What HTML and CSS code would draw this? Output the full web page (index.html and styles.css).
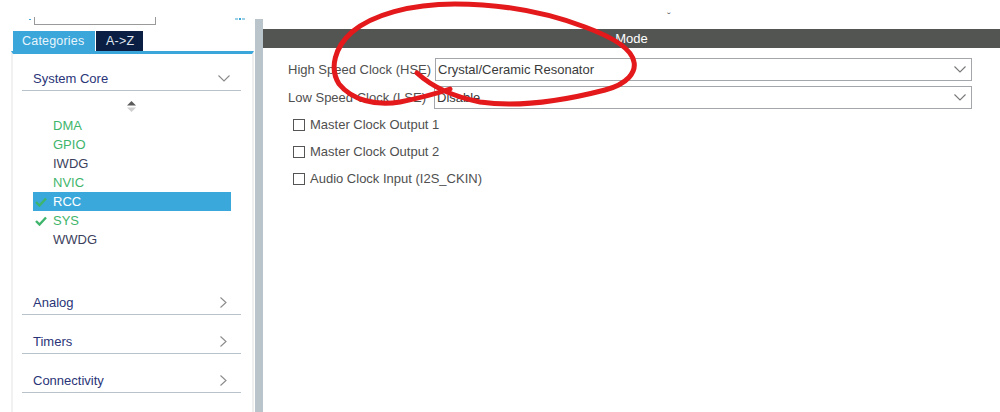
FILE: index.html
```html
<!DOCTYPE html>
<html lang="en">
<head>
<meta charset="utf-8">
<title>Pinout &amp; Configuration</title>
<link rel="stylesheet" href="styles.css">
</head>
<body>
<div class="app">
  <aside class="left">
    <div class="search-row">
      <span class="dot"></span>
      <div class="search-box"></div>
      <span class="search-icon"></span>
    </div>
    <div class="tabs">
      <div class="tab active">Categories</div>
      <div class="tab dark">A-&gt;Z</div>
    </div>
    <div class="panel">
      <div class="cat-head first">
        <span>System Core</span>
        <svg class="chev-down" width="12" height="7" viewBox="0 0 12 7"><path d="M0.5 0.5 L6 6 L11.5 0.5" fill="none" stroke="#8a8a8a" stroke-width="1.1"/></svg>
      </div>
      <div class="sorter">
        <svg width="9" height="11" viewBox="0 0 9 11"><path d="M4.5 0 L9 4.5 L0 4.5 Z" fill="#5b5b5b"/><path d="M0 6.5 L9 6.5 L4.5 11 Z" fill="#cfcfcf"/></svg>
      </div>
      <ul class="items">
        <li class="ok"><span class="chk"></span>DMA</li>
        <li class="ok"><span class="chk"></span>GPIO</li>
        <li><span class="chk"></span>IWDG</li>
        <li class="ok"><span class="chk"></span>NVIC</li>
        <li class="sel"><span class="chk"><svg width="12" height="10" viewBox="0 0 12 10"><path d="M1 5 L4.5 8.5 L11 1.5" fill="none" stroke="#3fb56c" stroke-width="2.4"/></svg></span>RCC</li>
        <li class="ok"><span class="chk"><svg width="12" height="10" viewBox="0 0 12 10"><path d="M1 5 L4.5 8.5 L11 1.5" fill="none" stroke="#3fb56c" stroke-width="2.4"/></svg></span>SYS</li>
        <li><span class="chk"></span>WWDG</li>
      </ul>
      <div class="cat-head analog">
        <span>Analog</span>
        <svg class="chev-right" width="7" height="11" viewBox="0 0 7 11"><path d="M0.5 0.5 L6 5.5 L0.5 10.5" fill="none" stroke="#8a8a8a" stroke-width="1.1"/></svg>
      </div>
      <div class="cat-head">
        <span>Timers</span>
        <svg class="chev-right" width="7" height="11" viewBox="0 0 7 11"><path d="M0.5 0.5 L6 5.5 L0.5 10.5" fill="none" stroke="#8a8a8a" stroke-width="1.1"/></svg>
      </div>
      <div class="cat-head">
        <span>Connectivity</span>
        <svg class="chev-right" width="7" height="11" viewBox="0 0 7 11"><path d="M0.5 0.5 L6 5.5 L0.5 10.5" fill="none" stroke="#8a8a8a" stroke-width="1.1"/></svg>
      </div>
    </div>
  </aside>
  <div class="divider"></div>
  <main class="main">
    <div class="top-strip"><span class="cut">ˇ</span></div>
    <div class="mode-bar">Mode</div>
    <div class="form">
      <div class="field">
        <label>High Speed Clock (HSE)</label>
        <div class="select"><span>Crystal/Ceramic Resonator</span><svg width="12" height="7" viewBox="0 0 12 7"><path d="M0.5 0.5 L6 6 L11.5 0.5" fill="none" stroke="#777" stroke-width="1.1"/></svg></div>
      </div>
      <div class="field second">
        <label>Low Speed Clock (LSE)</label>
        <div class="select"><span>Disable</span><svg width="12" height="7" viewBox="0 0 12 7"><path d="M0.5 0.5 L6 6 L11.5 0.5" fill="none" stroke="#777" stroke-width="1.1"/></svg></div>
      </div>
      <div class="checks">
        <div class="check"><span class="box"></span>Master Clock Output 1</div>
        <div class="check"><span class="box"></span>Master Clock Output 2</div>
        <div class="check"><span class="box"></span>Audio Clock Input (I2S_CKIN)</div>
      </div>
    </div>
  </main>
  <svg class="annotation" width="1000" height="412" viewBox="0 0 1000 412">
    <path d="M417,73 C430,85 450,96 480,102 C520,108 570,99 605,90 C628,84 636,72 634,62 C632,50 615,38 585,27 C545,12 500,4 455,4 C410,4 372,15 352,32 C335,47 329,68 339,84 C352,100 375,106 400,102 C420,98 438,93 450,89" fill="none" stroke="#e3191b" stroke-width="5" stroke-linecap="round" stroke-linejoin="round"/>
  </svg>
</div>
</body>
</html>
```

FILE: styles.css
```css
* { box-sizing: border-box; }
html, body { margin: 0; padding: 0; background: #ffffff; }
body { font-family: "Liberation Sans", Arial, sans-serif; }

.app {
  position: relative;
  display: flex;
  width: 1000px;
  height: 412px;
  overflow: hidden;
  background: #ffffff;
}

/* ---------- left column ---------- */
.left {
  width: 255px;
  flex: none;
  display: flex;
  flex-direction: column;
}

.search-row {
  height: 31px;
  display: flex;
  align-items: flex-start;
}
.dot {
  width: 2px;
  height: 1px;
  margin: 19px 0 0 29px;
  background: #3aa6da;
}
.search-box {
  width: 122px;
  height: 8px;
  margin: 17px 0 0 3px;
  border: 1px solid #9a9a9a;
  border-top: none;
}
.search-icon {
  width: 10px;
  height: 2px;
  margin: 18px 10px 0 auto;
  background: linear-gradient(to right, #9ccfe8 0 3px, transparent 3px 4px, #3aa6da 4px 6px, transparent 6px 7px, #9ccfe8 7px);
}

.tabs {
  display: flex;
  gap: 1px;
  margin-left: 13px;
  height: 20px;
}
.tab {
  height: 20px;
  line-height: 20px;
  font-size: 12.5px;
  color: #e9f5fc;
  padding: 0 0 0 9px;
  background: #3aa6da;
  letter-spacing: 0.2px;
  white-space: nowrap;
}
.tab.active { width: 82px; }
.tab.dark {
  width: 47px;
  background: #0b1f45;
  color: #dfe6f0;
  padding-left: 10px;
}

.panel {
  flex: 1;
  margin-left: 11px;
  width: 243px;
  border-top: 3px solid #3aa6da;
  border-left: 2px solid #f1f1f1;
  border-right: 2px solid #efefef;
  padding: 12px 11px 0 9px;
  display: flex;
  flex-direction: column;
}

.cat-head {
  height: 25px;
  display: flex;
  align-items: center;
  justify-content: space-between;
  border-bottom: 1px solid #b8c2cb;
  font-size: 13px;
  color: #2a3478;
  padding-left: 11px;
  margin-top: 14px;
}
.cat-head.first { margin-top: 0; }
.cat-head.analog { margin-top: 41px; }
.chev-down { margin-right: 11px; }
.chev-right { margin-right: 14px; }

.sorter {
  height: 25px;
  display: flex;
  justify-content: center;
  padding-top: 10px;
}

.items {
  list-style: none;
  margin: 0 0 0 11px;
  padding: 0;
  width: 198px;
}
.items li {
  height: 19px;
  display: flex;
  align-items: center;
  gap: 6px;
  padding-left: 2px;
  font-size: 13px;
  color: #3c3f5c;
}
.items li.ok { color: #3fb56c; }
.items li.sel { background: #3aa8db; color: #ffffff; }
.chk {
  width: 12px;
  height: 10px;
  display: flex;
}

/* ---------- divider ---------- */
.divider {
  width: 8px;
  flex: none;
  margin-top: 19px;
  background: #b9c4cb;
}

/* ---------- main ---------- */
.main {
  flex: 1;
  display: flex;
  flex-direction: column;
}
.top-strip {
  height: 29px;
  position: relative;
  font-size: 11px;
  color: #555;
}
.cut {
  display: block;
  margin: 12px 0 0 404px;
  line-height: 10px;
}
.mode-bar {
  height: 19px;
  line-height: 19px;
  background: #535553;
  color: #ffffff;
  text-align: center;
  font-size: 13px;
}

.form {
  padding: 10px 28px 0 25px;
  color: #4f4f4f;
  font-size: 13px;
}
.field {
  display: grid;
  grid-template-columns: 146px 1fr;
  align-items: center;
  height: 23px;
}
.field.second { margin-top: 5px; }
.field label { white-space: nowrap; }
.select {
  height: 23px;
  border: 1px solid #a3a7ab;
  display: flex;
  align-items: center;
  justify-content: space-between;
  padding: 0 5px 0 2px;
  color: #3a3a3a;
}
.field:first-child .select { margin-left: 1px; }

.checks {
  margin-top: 2px;
}
.check {
  height: 27px;
  display: flex;
  align-items: center;
  gap: 5px;
  padding-left: 5px;
}
.box {
  width: 12px;
  height: 12px;
  border: 1px solid #555;
  background: #fff;
}

.annotation {
  position: absolute;
  left: 0;
  top: 0;
  pointer-events: none;
}
```
